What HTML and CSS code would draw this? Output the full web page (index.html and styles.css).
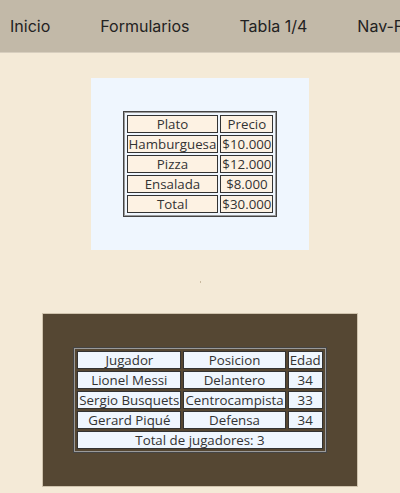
FILE: index.html
```html
<!DOCTYPE html>
<html lang="es">
<head>
<meta charset="utf-8">
<title>Tablas</title>
<link rel="stylesheet" href="styles.css">
</head>
<body>
<nav class="nav">
  <a class="nav-link" href="#">Inicio</a>
  <a class="nav-link" href="#">Formularios</a>
  <a class="nav-link" href="#">Tabla 1/4</a>
  <a class="nav-link" href="#">Nav-Footer</a>
</nav>
<main class="main">
  <section class="box box-light">
    <table class="tbl tbl-menu">
      <tr><td>Plato</td><td>Precio</td></tr>
      <tr><td>Hamburguesa</td><td>$10.000</td></tr>
      <tr><td>Pizza</td><td>$12.000</td></tr>
      <tr><td>Ensalada</td><td>$8.000</td></tr>
      <tr><td>Total</td><td>$30.000</td></tr>
    </table>
  </section>
  <div class="dot"></div>
  <section class="box box-dark">
    <table class="tbl tbl-team">
      <tr><td>Jugador</td><td>Posicion</td><td>Edad</td></tr>
      <tr><td>Lionel Messi</td><td>Delantero</td><td>34</td></tr>
      <tr><td>Sergio Busquets</td><td>Centrocampista</td><td>33</td></tr>
      <tr><td>Gerard Piqué</td><td>Defensa</td><td>34</td></tr>
      <tr><td colspan="3">Total de jugadores: 3</td></tr>
    </table>
  </section>
</main>
</body>
</html>
```

FILE: styles.css
```css
html, body {
  margin: 0;
  padding: 0;
}
body {
  background: #f4ead7;
  font-family: "Open Sans", "Noto Sans", sans-serif;
  width: 400px;
  height: 493px;
  overflow: hidden;
}
.nav {
  display: flex;
  gap: 50px;
  height: 52px;
  align-items: center;
  padding-left: 10px;
  background: #c2b9a8;
  border-bottom: 1px solid #d8cfbf;
  white-space: nowrap;
  overflow: hidden;
}
.nav-link {
  font-family: Inter, sans-serif;
  font-size: 16px;
  color: #222;
  text-decoration: none;
}
.main {
  display: flex;
  flex-direction: column;
  align-items: center;
  padding-top: 25px;
}
.box {
  display: flex;
  justify-content: center;
  align-items: center;
  padding: 0;
}
.box-light {
  background: #eff6fe;
  width: 218px;
  height: 172px;
}
.box-dark {
  background: #554733;
  width: 314px;
  height: 172px;
  box-shadow: 0 0 0 1px #cfc3ad;
}
.dot {
  width: 1px;
  height: 2px;
  background: #c9b99f;
  margin: 31px 0;
}
.tbl {
  flex: none;
  border: 1px solid #444;
  padding: 1px;
  box-shadow: inset 0 0 0 1px #9a9a9a;
  border-spacing: 2px;
  font-size: 13.3px;
  line-height: 16px;
  color: #333;
  text-align: center;
  white-space: nowrap;
}
.tbl td {
  border: 1px solid #333;
  padding: 0 1px;
}
.tbl-menu td {
  background: #fdf2e3;
}
.tbl-team td {
  background: #eff6fe;
}
```
